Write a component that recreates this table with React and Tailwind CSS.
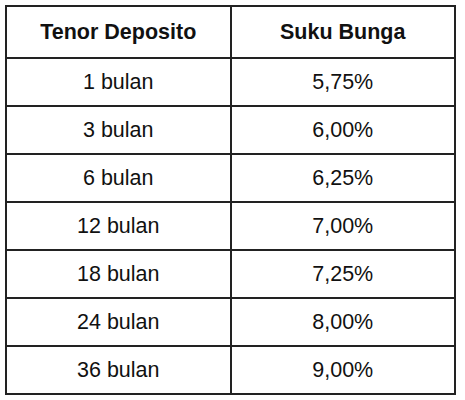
import React from 'react';

const rates = [
  { tenor: '1 bulan', rate: '5,75%' },
  { tenor: '3 bulan', rate: '6,00%' },
  { tenor: '6 bulan', rate: '6,25%' },
  { tenor: '12 bulan', rate: '7,00%' },
  { tenor: '18 bulan', rate: '7,25%' },
  { tenor: '24 bulan', rate: '8,00%' },
  { tenor: '36 bulan', rate: '9,00%' },
];

export default function App() {
  return (
    <div className="w-[465px] h-[400px] bg-white pt-[5px] pl-[5px] font-['Liberation_Sans',Arial,sans-serif] text-[#111]">
      <table className="border-collapse w-[451px] table-fixed text-[21.5px]">
        <thead>
          <tr className="h-[52px]">
            <th className="border-2 border-[#222] font-bold w-1/2">Tenor Deposito</th>
            <th className="border-2 border-[#222] font-bold w-1/2">Suku Bunga</th>
          </tr>
        </thead>
        <tbody>
          {rates.map((r) => (
            <tr key={r.tenor} className="h-[48px]">
              <td className="border-2 border-[#222] text-center">{r.tenor}</td>
              <td className="border-2 border-[#222] text-center">{r.rate}</td>
            </tr>
          ))}
        </tbody>
      </table>
    </div>
  );
}
